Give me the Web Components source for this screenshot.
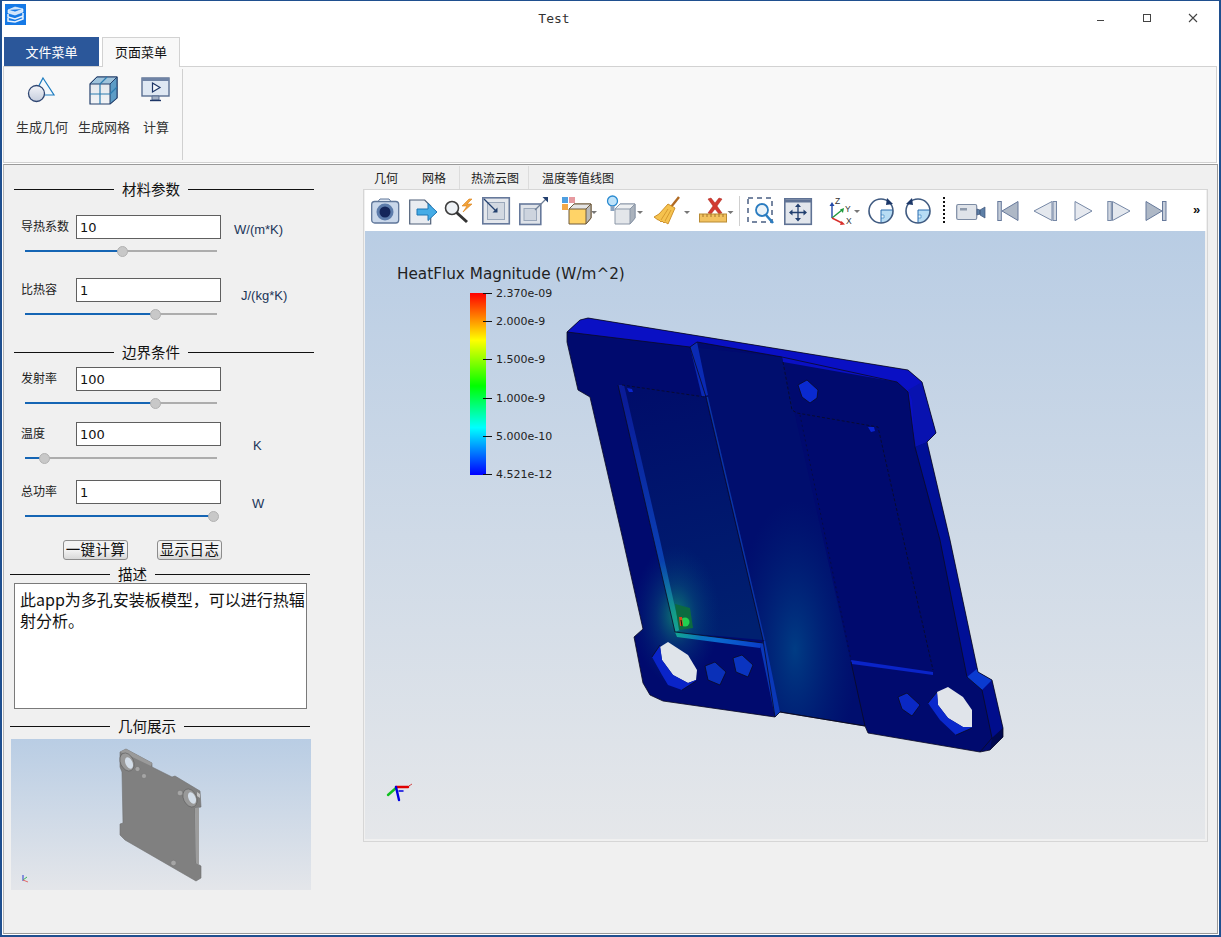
<!DOCTYPE html>
<html lang="zh">
<head>
<meta charset="utf-8">
<title>Test</title>
<style>
  html, body { margin: 0; height: 100%; background: #f0f0f0; }
  body { font-family: "Liberation Sans", "Noto Sans CJK SC", sans-serif; }
</style>
</head>
<body>
<app-window></app-window>

<script>
const CJK = '"Noto Sans CJK SC", "Liberation Sans", sans-serif';
const caret = (x, y) => `<path d="M${x} ${y}h6l-3 3z" fill="#777"/>`;

const ribbonIcons = {
  shape: `<svg width="32" height="28" viewBox="0 0 32 28">
    <path d="M17 2 28 19H8z" fill="#f4f8fc" stroke="#1c7cc0" stroke-width="1.2"/>
    <defs><linearGradient id="c" x1="0" y1="0" x2="0" y2="1"><stop offset="0" stop-color="#f2f4f8"/><stop offset="1" stop-color="#c5cddd"/></linearGradient></defs>
    <circle cx="10.500" cy="17.500" r="8" fill="url(#c)" stroke="#2f4672" stroke-width="1.300"/></svg>`,
  mesh: `<svg width="32" height="30" viewBox="0 0 32 30">
    <defs><linearGradient id="m" x1="0" y1="0" x2="0" y2="1"><stop offset="0" stop-color="#dfe3e9"/><stop offset="1" stop-color="#f2f4f6"/></linearGradient></defs>
    <path d="M2 9 9 2h20v21l-7 6H2z" fill="url(#m)" stroke="#24406c" stroke-width="1.200"/>
    <path d="M22 9 29 2v21l-7 6z" fill="#5d9cc6" stroke="#24406c"/>
    <path d="M2 9 9 2h20l-7 7z" fill="#9fc3db" stroke="#24406c"/>
    <path d="M12 9v20M2 19h20M12 9l7-7M22 19l7-7" stroke="#2d7cb0" stroke-width="1.200" fill="none"/></svg>`,
  run: `<svg width="30" height="26" viewBox="0 0 30 26">
    <rect x="1" y="1" width="27" height="18" fill="#dfe8f3" stroke="#5a6f92" stroke-width="1.400"/>
    <path d="M1 1h27v3H1z" fill="#6f83a5"/>
    <path d="M11.500 6 19 10.500 11.500 15z" fill="#f3f6fa" stroke="#1d3566" stroke-width="1.200"/>
    <path d="M11 19h7v4h-7z" fill="#a5b2c5" stroke="#5a6f92"/><path d="M9 23.500h11" stroke="#1d3566" stroke-width="1.400"/></svg>`
};

const toolIcons = {
  camera: `<rect x=".7" y="6.500" width="27" height="21.500" rx="3" fill="#c9d7ea" stroke="#5f7699" stroke-width="1.300"/><path d="M7 6.500l2-2.500h9l2 2.500z" fill="#dfe7f2" stroke="#5f7699"/><circle cx="14" cy="17" r="8.500" fill="#5d7cab"/><circle cx="14" cy="17" r="5.500" fill="#14255a"/>`,
  export: `<path d="M.7 5h15l6 6v18H.7z" fill="#e9ecf1" stroke="#4f5f78" stroke-width="1.200"/><path d="M8 14h11V8.500L28 17l-9 8.500V20H8z" fill="#45ace6" stroke="#1f76b4"/>`,
  bolt: `<circle cx="7" cy="13" r="6.500" fill="#eef2f6" stroke="#3d3d3d" stroke-width="1.600"/><path d="M11.500 17.500 22 27" stroke="#333" stroke-width="3"/><path d="M24 4l-7 7h5l-4 6 9-8h-5l5-5z" fill="#f2a33a" stroke="#d8801a" stroke-width=".6"/>`,
  boxin: `<rect x=".8" y="2.800" width="26.500" height="26" fill="#e4e7ec" stroke="#66799b" stroke-width="1.600"/><rect x="5.500" y="7.500" width="17" height="17" fill="#d2d8e1" stroke="#9aa7ba"/><path d="M2 4l12 12" stroke="#23406f" stroke-width="1.300"/><path d="M15.500 17.500h-5l5-5z" fill="#23406f"/>`,
  boxout: `<rect x=".8" y="9" width="21" height="20.500" fill="#dfe3e9" stroke="#66799b" stroke-width="1.600"/><rect x="5" y="13.500" width="12.500" height="12" fill="#cdd4de" stroke="#9aa7ba"/><path d="M16 15 27 4" stroke="#6f7f97" stroke-width="1.200"/><path d="M29 2v5.500l-5.500-5.500z" fill="#23406f"/>`,
  cube: `<rect x="1" y="2" width="6" height="6" fill="#4e9fe0"/><rect x="8" y="2" width="6" height="6" fill="#e79aa0"/><rect x="1" y="9" width="6" height="6" fill="#f3a746"/><path d="M8 14l5-5h17v14l-5 6H8z" fill="#ffd367" stroke="#6f5a3c"/><path d="M25 14v15l5-6V9z" fill="#b9b9b9" stroke="#6f5a3c"/><path d="M8 14l5-5h17l-5 5z" fill="#e4e4e4" stroke="#6f5a3c"/>${caret(30, 16)}`,
  lightcube: `<circle cx="5.500" cy="6" r="5" fill="#bfe3fa" stroke="#2a8ad0" stroke-width="1.300"/><path d="M3.500 11h4v5h-4z" fill="#8aa3bf"/><path d="M8 14l5-5h15v14l-5 6H8z" fill="#e3e6ea" stroke="#8b97a8"/><path d="M23 14v15l5-6V9z" fill="#aab2bc" stroke="#8b97a8"/><path d="M8 14l5-5h15l-5 5z" fill="#eef0f2" stroke="#8b97a8"/>${caret(30, 16)}`,
  broom: `<path d="M25 2 17 12" stroke="#b06a22" stroke-width="2.400"/><path d="M14 9l7 4-7 16-3-2-1 1-2-2-1 1-2-2-1 0-4-3 5-3z" fill="#f5c24e" stroke="#c98a22" stroke-width=".9"/><path d="M14 14 7 25M17 15l-6 11" stroke="#c98a22" stroke-width=".7"/>${caret(30, 16)}`,
  ruler: `<path d="M9 4l3-1 4 5 4-5 3 1-5 7 5 7-3 1-4-5-4 5-3-1 5-7z" fill="#d23a30" stroke="#a8241c" stroke-width=".5"/><rect x=".5" y="19" width="27" height="8" fill="#f2c260" stroke="#b98b33"/><path d="M4 19v3M8 19v3M12 19v3M16 19v3M20 19v3M24 19v3" stroke="#a4772b"/>${caret(28.500, 16)}`,
  boxzoom: `<rect x="1" y="3" width="24" height="24" fill="none" stroke="#4a5f82" stroke-width="1.500" stroke-dasharray="5 4"/><circle cx="15" cy="15" r="6" fill="#eaf2f8" stroke="#2a7cc0" stroke-width="1.800"/><path d="M19 20l7 8" stroke="#2a7cc0" stroke-width="2.600"/>`,
  fit: `<rect x=".8" y="3.800" width="26.500" height="25.500" fill="#e2e6ec" stroke="#5f7294" stroke-width="1.600"/><path d="M1 6h26" stroke="#5f7294" stroke-width="3"/><path d="M14 10v15M6.500 17.500h15" stroke="#23406f" stroke-width="1.300"/><path d="M14 8.500l3 3.500h-6zM14 26.500l3-3.500h-6zM5 17.500l3.500-3v6zM23 17.500l-3.500-3v6z" fill="#23406f"/>`,
  axes: `<path d="M2 23V10" stroke="#2248a8" stroke-width="1.400"/><path d="M2 7l2.500 4h-5z" fill="#2248a8"/><path d="M2 23 12 15" stroke="#1f9a3c" stroke-width="1.400"/><path d="M14 13l-1 5-3-3.500z" fill="#1f9a3c"/><path d="M2 23 12 28" stroke="#d8302c" stroke-width="1.400"/><path d="M15 29.500l-5 .5 1.500-4z" fill="#d8302c"/><text x="5" y="9" font-family="Liberation Sans" font-size="8.500" fill="#333">Z</text><text x="15" y="17" font-family="Liberation Sans" font-size="8.500" fill="#333">Y</text><text x="16" y="29" font-family="Liberation Sans" font-size="8.500" fill="#333">X</text>${caret(24, 15)}`,
  cw: `<path d="M13 15h12a12 12 0 0 1-12 13z" fill="#b7dcf4"/><path d="M13 20h3v3h-3" fill="#eaf5fc" stroke="#2a7cc0" stroke-width=".6"/><path d="M13 15h12M13 15v13" stroke="#2a6cb0" stroke-width="1"/><circle cx="13" cy="16" r="12" fill="none" stroke="#3f5a80" stroke-width="1.600"/><path d="M19 3l6 6-7 1z" fill="#1c3768"/>`,
  ccw: `<path d="M13 15h12a12 12 0 0 1-12 13z" fill="#b7dcf4"/><path d="M13 20h3v3h-3" fill="#eaf5fc" stroke="#2a7cc0" stroke-width=".6"/><path d="M13 15h12M13 15v13" stroke="#2a6cb0" stroke-width="1"/><circle cx="13" cy="16" r="12" fill="none" stroke="#3f5a80" stroke-width="1.600"/><path d="M7 3 1 9l7 1z" fill="#1c3768"/>`,
  video: `<rect x=".7" y="9.500" width="20" height="15" rx="1.500" fill="#dfe3e9" stroke="#7c8ba3" stroke-width="1.200"/><rect x="4" y="13" width="7" height="2.500" fill="#8e9aac"/><path d="M21 14l3 1v4l-3 1zM24 15l5-3v11l-5-3z" fill="#5d7fa6" stroke="#40587c" stroke-width=".7"/>`,
  first: `<rect x=".8" y="6.500" width="3.500" height="19" fill="#c4ccd8" stroke="#66799b"/><path d="M21 6.500v19L5 16z" fill="#aeb8c6" stroke="#66799b"/>`,
  prev: `<path d="M19 6.500v19L1 16z" fill="#e4e8ee" stroke="#7688a6"/><rect x="20" y="6.500" width="3.500" height="19" fill="#d1d7e1" stroke="#7688a6"/>`,
  play: `<path d="M1 6.500v19L18 16z" fill="#e6e9ef" stroke="#7688a6"/>`,
  next: `<rect x=".8" y="6.500" width="3.500" height="19" fill="#d1d7e1" stroke="#7688a6"/><path d="M5.500 6.500v19L23 16z" fill="#e4e8ee" stroke="#7688a6"/>`,
  last: `<path d="M1 6.500v19L17 16z" fill="#aeb8c6" stroke="#66799b"/><rect x="17.500" y="6.500" width="3.500" height="19" fill="#c4ccd8" stroke="#66799b"/>`
};

class TitleBar extends HTMLElement {
  constructor() {
    super();
    this.attachShadow({ mode: "open" });
    this.shadowRoot.innerHTML = `
      <style>
        :host { display: flex; align-items: center; height: 36px; background: #fff; }
        svg { display: block; }
        .logo { margin: -10px 0 0 3px; }
        .title { flex: 1; text-align: center; font: 13px "DejaVu Sans Mono", monospace; color: #333; margin: -1px 0 0 4px; }
        .btns { display: flex; align-items: center; margin: -3px 3px 0 0; }
        .btn { width: 46px; display: flex; justify-content: center; }
      </style>
      <svg class="logo" width="21" height="21" viewBox="0 0 21 21">
        <rect width="21" height="21" fill="#1579e6"/>
        <path d="M3 6 10 3l8 2-8 3zM3 6v3l7 2 8-3V5" fill="#cfe3fa" stroke="#fff" stroke-width=".6"/>
        <path d="M3 10v3l7 2 8-3V9M3 14v3l7 1 8-3v-3" fill="none" stroke="#e9f2fd" stroke-width="1.500"/>
      </svg>
      <div class="title">Test</div>
      <div class="btns">
        <div class="btn"><svg width="10" height="10"><path d="M1 7.500h7" stroke="#444"/></svg></div>
        <div class="btn"><svg width="10" height="10"><rect x="1.500" y="1.500" width="7" height="7" fill="none" stroke="#444"/></svg></div>
        <div class="btn"><svg width="10" height="10"><path d="M1 1l8 8M9 1 1 9" stroke="#444" stroke-width="1.100"/></svg></div>
      </div>`;
  }
}
customElements.define("title-bar", TitleBar);

class RibbonItem extends HTMLElement {
  constructor() {
    super();
    this.attachShadow({ mode: "open" });
  }
  connectedCallback() {
    this.shadowRoot.innerHTML = `
      <style>
        :host { display: flex; flex-direction: column; align-items: center; font: 13px ${CJK}; color: #333; }
        .ico { height: 42px; display: flex; align-items: center; }
        .lbl { margin-top: 7px; line-height: 18px; white-space: nowrap; }
      </style>
      <div class="ico">${ribbonIcons[this.getAttribute("icon")]}</div>
      <div class="lbl"><slot></slot></div>`;
  }
}
customElements.define("ribbon-item", RibbonItem);

class RibbonBar extends HTMLElement {
  constructor() {
    super();
    this.attachShadow({ mode: "open" });
    this.shadowRoot.innerHTML = `
      <style>
        :host { display: block; font: 13px ${CJK}; background: #fff; padding-bottom: 1px; }
        .tabs { display: flex; height: 29px; padding-left: 2px; background: #fff; }
        .tab { display: flex; align-items: center; justify-content: center; box-sizing: border-box; padding-bottom: 1px; }
        .file { width: 95px; background: #2b579a; color: #fff; margin-right: 3px; }
        .page { width: 78px; color: #111; background: #f8f8f8; border: 1px solid #d2d2d2; border-bottom: 0; height: 30px; position: relative; z-index: 1; padding-bottom: 2px; }
        .panel { margin: 0 2px 0 1px; background: #f8f8f8; border: 1px solid #d2d2d2; box-sizing: border-box; height: 97px; display: flex; }
        .group { width: 179px; box-sizing: border-box; margin-top: 2px; border-right: 1px solid #d0d0d0; display: flex; gap: 10px; padding: 0 0 0 12px; height: 91px; }
        .group ribbon-item:last-child { margin-left: 1px; }
      </style>
      <div class="tabs"><div class="tab file">文件菜单</div><div class="tab page">页面菜单</div></div>
      <div class="panel">
        <div class="group">
          <ribbon-item icon="shape">生成几何</ribbon-item>
          <ribbon-item icon="mesh">生成网格</ribbon-item>
          <ribbon-item icon="run">计算</ribbon-item>
        </div>
      </div>`;
  }
}
customElements.define("ribbon-bar", RibbonBar);

class SectionHeading extends HTMLElement {
  constructor() {
    super();
    this.attachShadow({ mode: "open" });
    this.shadowRoot.innerHTML = `
      <style>
        :host { display: flex; align-items: center; width: 300px; height: 18px; font: 14.5px ${CJK}; color: #111; gap: 8px; white-space: nowrap; }
        .l { height: 1px; background: #111; }
        .a { width: 100px; }
        .b { flex: 1; }
        .t { margin-bottom: 2px; }
      </style>
      <div class="l a"></div><span class="t"><slot></slot></span><div class="l b"></div>`;
  }
}
customElements.define("section-heading", SectionHeading);

class ParamRow extends HTMLElement {
  constructor() {
    super();
    this.attachShadow({ mode: "open" });
  }
  connectedCallback() {
    const pct = this.getAttribute("pct");
    const unitX = this.getAttribute("unit-x") || 13;
    const unitY = this.getAttribute("unit-y") || 4;
    this.shadowRoot.innerHTML = `
      <style>
        :host { display: block; height: 42px; }
        .top { display: flex; height: 24px; padding-left: 17px; }
        .lbl { width: 55px; font: 12px/22px ${CJK}; color: #222; white-space: nowrap; }
        .val { box-sizing: border-box; width: 145px; height: 24px; background: #fff; border: 1px solid #5f5f5f; font: 13px/23px "DejaVu Sans", sans-serif; color: #111; padding-left: 3px; }
        .unit { font: 13px/18px "Liberation Sans", sans-serif; color: #1a3558; margin-left: ${unitX}px; margin-top: ${unitY}px; white-space: nowrap; height: 18px; }
        .track { position: relative; margin: 11px 0 0 21px; width: 192px; height: 2px; background: #adadad; }
        .fill { height: 2px; background: #1565b4; width: ${pct}%; }
        .thumb { position: absolute; left: ${pct}%; top: -4.500px; width: 11px; height: 11px; margin-left: -5px; box-sizing: border-box; border-radius: 50%; background: #c8c8c8; border: 1px solid #b2b2b2; }
      </style>
      <div class="top">
        <div class="lbl">${this.getAttribute("label")}</div>
        <div class="val">${this.getAttribute("value")}</div>
        <div class="unit">${this.getAttribute("unit") || ""}</div>
      </div>
      <div class="track"><div class="fill"></div><div class="thumb"></div></div>`;
  }
}
customElements.define("param-row", ParamRow);

class GeomPreview extends HTMLElement {
  constructor() {
    super();
    this.attachShadow({ mode: "open" });
    this.shadowRoot.innerHTML = `
      <style>
        :host { display: block; width: 300px; height: 151px; }
        svg { display: block; }
      </style>
      <svg width="300" height="151" viewBox="11 739 300 151">
        <defs>
          <linearGradient id="bg" x1="0" y1="0" x2="0" y2="1"><stop offset="0" stop-color="#b9cde4"/><stop offset="1" stop-color="#e4e6ea"/></linearGradient>
        </defs>
        <rect x="11" y="739" width="300" height="151" fill="url(#bg)"/>
        <path d="M120 752 126 749 152 763V767L172 777 175 776 200 791 201 807 195 808 196 863 201 866V878L196 881 125 840 120 835V824L123 823 122 772 120 767z" fill="#808080" stroke="#6f6f6f" stroke-width=".6"/>
        <path d="M195 808 199 808 199 865 196 863z" fill="#9c9c9c"/>
        <path d="M120 752 126 749 152 763 151 766 126 754z" fill="#9a9a9a"/>
        <ellipse cx="127" cy="762" rx="6.500" ry="9.500" fill="#999" stroke="#5e5e5e" stroke-width=".6" transform="rotate(-25 127 762)"/>
        <ellipse cx="129" cy="763" rx="3.500" ry="6" fill="#d3dde8" transform="rotate(-25 129 763)"/>
        <ellipse cx="190" cy="798" rx="6.500" ry="9.500" fill="#999" stroke="#5e5e5e" stroke-width=".6" transform="rotate(-25 190 798)"/>
        <ellipse cx="192" cy="798" rx="3.500" ry="6" fill="#d3dde8" transform="rotate(-25 192 798)"/>
        <g fill="#a5a5a5" stroke="#6d6d6d" stroke-width=".5"><circle cx="137.500" cy="769" r="2.500"/><circle cx="144" cy="776" r="2.500"/><circle cx="180" cy="793" r="2.800"/><circle cx="173.500" cy="863" r="2.800"/></g>
        <path d="M197 792 200 794V798L197 796z" fill="#c2c2c2"/>
        <path d="M23 881V875" stroke="#2a3bd0"/><path d="M23 880 27 877" stroke="#3ab85a"/><path d="M23 880 28 882" stroke="#e26a6a"/>
      </svg>`;
  }
}
customElements.define("geom-preview", GeomPreview);

class SidePanel extends HTMLElement {
  constructor() {
    super();
    this.attachShadow({ mode: "open" });
    this.shadowRoot.innerHTML = `
      <style>
        :host { display: block; width: 359px; flex: none; box-sizing: border-box; padding-top: 15px; font-family: ${CJK}; }
        .in { margin-left: 10px; }
        .out { margin-left: 6px; }
        .btns { display: flex; gap: 29px; margin: 18px 0 0 59px; }
        button { box-sizing: border-box; width: 65px; height: 20px; padding: 0 0 3px; font: 14.5px/15px ${CJK}; letter-spacing: .4px; color: #111; background: linear-gradient(#f3f3f3, #f3f3f3 50%, #d8d8d8); border: 1px solid #8c8c8c; border-radius: 3px; white-space: nowrap; }
        .desc { box-sizing: border-box; width: 293px; height: 126px; margin-left: 10px; background: #fff; border: 1px solid #7a7a7a; padding: 5px 0 5px 5px; font: 16px/21px ${CJK}; color: #111; }
        .pv { margin: 4px 0 0 7px; }
      </style>
      <section-heading class="in">材料参数</section-heading>
      <param-row style="margin-top:17px" label="导热系数" value="10" unit="W/(m*K)" pct="50.500" unit-y="6"></param-row>
      <param-row style="margin-top:21px" label="比热容" value="1" unit="J/(kg*K)" unit-x="20" unit-y="9" pct="67.500"></param-row>
      <section-heading style="margin-top:23px" class="in">边界条件</section-heading>
      <param-row style="margin-top:6px" label="发射率" value="100" pct="67.500"></param-row>
      <param-row style="margin-top:13px" label="温度" value="100" unit="K" unit-x="32" unit-y="15" pct="10"></param-row>
      <param-row style="margin-top:16px" label="总功率" value="1" unit="W" unit-x="31" unit-y="15" pct="98"></param-row>
      <div class="btns"><button>一键计算</button><button>显示日志</button></div>
      <section-heading style="margin-top:5px" class="out">描述</section-heading>
      <div class="desc">此app为多孔安装板模型，可以进行热辐射分析。</div>
      <section-heading style="margin-top:8px" class="out">几何展示</section-heading>
      <div class="pv"><geom-preview></geom-preview></div>`;
  }
}
customElements.define("side-panel", SidePanel);

class ToolButton extends HTMLElement {
  constructor() {
    super();
    this.attachShadow({ mode: "open" });
  }
  connectedCallback() {
    const w = this.getAttribute("w");
    this.shadowRoot.innerHTML = `
      <style>
        :host { display: block; flex: none; height: 32px; width: ${w}px; }
        svg { display: block; overflow: visible; }
      </style>
      <svg width="${w}" height="32" viewBox="0 0 ${w} 32">${toolIcons[this.getAttribute("icon")]}</svg>`;
  }
}
customElements.define("tool-button", ToolButton);

class ToolStrip extends HTMLElement {
  constructor() {
    super();
    this.attachShadow({ mode: "open" });
    // [icon, gap from previous, width]
    const items = [
      ["camera", 6, 28], ["export", 10, 28], ["bolt", 8, 29], ["boxin", 8, 28], ["boxout", 9, 29],
      ["cube", 13, 36], ["lightcube", 10, 36], ["broom", 11, 36], ["ruler", 9, 36], ["sep", 4, 1],
      ["boxzoom", 7, 28], ["fit", 9, 28], ["axes", 18, 30], ["cw", 8, 26], ["ccw", 11, 26], ["dots", 12, 2],
      ["video", 11, 30], ["first", 11, 22], ["prev", 14, 24], ["play", 17, 19], ["next", 14, 24], ["last", 14, 22]
    ];
    const html = items.map(([n, g, w]) => {
      if (n === "sep") return `<div class="sep" style="margin-left:${g}px"></div>`;
      if (n === "dots") return `<div class="dots" style="margin-left:${g}px"></div>`;
      return `<tool-button icon="${n}" w="${w}" style="margin-left:${g}px"></tool-button>`;
    }).join("");
    this.shadowRoot.innerHTML = `
      <style>
        :host { display: flex; align-items: flex-start; height: 41px; background: #fff; box-sizing: border-box; padding: 5px 0 0 0; }
        .sep { width: 1px; height: 30px; background: #cfcfcf; margin-top: 1px; flex: none; }
        .dots { width: 2px; height: 27px; margin-top: 2px; flex: none; background: repeating-linear-gradient(#111 0 2px, transparent 2px 4px); }
        .more { margin-left: 26px; font: bold 13px/30px "Liberation Sans", sans-serif; color: #111; }
      </style>
      ${html}<div class="more">»</div>`;
  }
}
customElements.define("tool-strip", ToolStrip);

class HeatView extends HTMLElement {
  constructor() {
    super();
    this.attachShadow({ mode: "open" });
    const ticks = [[293, "2.370e-09"], [321, "2.000e-9"], [359, "1.500e-9"], [398, "1.000e-9"], [436, "5.000e-10"], [474, "4.521e-12"]];
    const sil = "M567 332 580 320 588 318 908 370 922 382 936 433 927 442 950 540 978 672 992 680 1003 728V737L990 750 980 752 868 733 865 726 780 712 775 717 663 701 650 695 643 683 634 637 643 629 623 540 590 397 578 390 567 342z";
    this.shadowRoot.innerHTML = `
      <style>
        :host { display: block; width: 840px; height: 608px; }
        svg { display: block; }
        text { font-family: "DejaVu Sans", sans-serif; fill: #222; }
      </style>
      <svg width="840" height="608" viewBox="365 231 840 608">
        <defs>
          <linearGradient id="bg" x1="0" y1="0" x2="0" y2="1"><stop offset="0" stop-color="#b9cde4"/><stop offset="1" stop-color="#e5e7ea"/></linearGradient>
          <linearGradient id="bar" x1="0" y1="1" x2="0" y2="0">
            <stop offset="0" stop-color="#0000ff"/><stop offset=".26" stop-color="#00ffff"/><stop offset=".49" stop-color="#00ff00"/><stop offset=".74" stop-color="#ffff00"/><stop offset="1" stop-color="#ff0000"/>
          </linearGradient>
          <linearGradient id="rec" gradientUnits="userSpaceOnUse" x1="640" y1="390" x2="700" y2="640">
            <stop offset="0" stop-color="#000d6a"/><stop offset="1" stop-color="#002070"/>
          </linearGradient>
          <linearGradient id="strip" gradientUnits="userSpaceOnUse" x1="640" y1="400" x2="670" y2="630">
            <stop offset="0" stop-color="#0a1c98"/><stop offset=".7" stop-color="#0a40b4"/><stop offset="1" stop-color="#1fc0c0"/>
          </linearGradient>
          <linearGradient id="strip2" gradientUnits="userSpaceOnUse" x1="675" y1="632" x2="763" y2="645">
            <stop offset="0" stop-color="#18d0b0"/><stop offset=".3" stop-color="#0a78d0"/><stop offset="1" stop-color="#0a3cc8"/>
          </linearGradient>
          <radialGradient id="glow"><stop offset="0" stop-color="#12a070" stop-opacity=".75"/><stop offset=".45" stop-color="#0a6a80" stop-opacity=".35"/><stop offset="1" stop-color="#003a80" stop-opacity="0"/></radialGradient>
          <radialGradient id="midglow"><stop offset="0" stop-color="#004488" stop-opacity=".85"/><stop offset="1" stop-color="#002a78" stop-opacity="0"/></radialGradient>
          <clipPath id="plate"><path d="${sil}"/></clipPath>
          <clipPath id="midclip"><path d="M690 347 697 342 706 397 763 640 780 712 865 726 851 662 783 362 782 357z"/></clipPath>
        </defs>
        <rect x="365" y="231" width="840" height="608" fill="url(#bg)"/>

        <text x="397" y="279" font-size="15.250">HeatFlux Magnitude (W/m^2)</text>
        <rect x="470" y="293" width="16" height="182" fill="url(#bar)"/>
        ${ticks.map(([y, t]) => `<path d="M483 ${y}.500h9" stroke="#111"/><text x="496" y="${y + 4}" font-size="11">${t}</text>`).join("")}

        <path d="${sil}" fill="#000a6e"/>
        <g clip-path="url(#plate)">
          <path d="M567 332 580 320 588 318 908 370 922 382 936 433 927 442 915 447 908 392 897 382 783 362 782 357 697 342 690 347z" fill="#0a10c4"/>
          <path d="M908 390 922 382 936 433 927 442 915 447 912 400z" fill="#0812b0"/>
          <path d="M915 447 927 442 950 540 978 672 967 677 940 540z" fill="#000f96"/>
          <path d="M967 677 978 672 992 680 1003 728 992 738 982 690z" fill="#000d8c"/>
          <path d="M967 677 978 668 992 680 982 690z" fill="#0a3ad0"/>
          <path d="M992 738 1003 728V737L990 750z" fill="#00084f"/>
          <path d="M690 347 697 342 706 397 763 640 780 712 865 726 851 662 783 362 782 357z" fill="#000e6e"/>
          <g clip-path="url(#midclip)"><ellipse cx="795" cy="650" rx="62" ry="150" fill="url(#midglow)"/></g>
          <path d="M618 385 705 397 763 640 675 632z" fill="url(#rec)"/>
          <path d="M618 385 624 385 660 540 680 630 675 632z" fill="url(#strip)"/>
          <path d="M675 632 763 643 760 648 677 637z" fill="url(#strip2)"/>
          <path d="M690 347 697 342 708 395 702 397z" fill="#0a2ab4"/>
          <path d="M706 397 708 397 765 640 763 640z" fill="#0a34a8"/>
          <path d="M760 645 765 640 780 712 775 717z" fill="#0a38b8"/>
          <path d="M851 660 933 672 933 675 852 664z" fill="#0a24c8"/>
          <ellipse cx="676" cy="615" rx="44" ry="70" fill="url(#glow)"/>
        </g>
        <path d="M675 604 690 608 693 628 679 630z" fill="#0c6a40"/>
        <circle cx="685" cy="622" r="4.500" fill="#20d050"/>
        <path d="M679 617l3 0 1 9h-3z" fill="#d84818"/>
        <path d="M681 620l1 6" stroke="#111"/>

        <path d="M668 642 688 655 697 670 696 680 688 683 673 675 662 660 660 647z" fill="#dfe4ea"/>
        <path d="M652 657 660 645 662 660 673 675 688 683 696 680 696 681 682 690 668 685 662 675z" fill="#0a24c8"/>
        <path d="M948 687 963 697 972 710 972 727 963 727 948 718 938 705 937 692z" fill="#e0e4ea"/>
        <path d="M928 703 937 692 938 705 948 718 963 727 972 727 972 728 956 735 940 720z" fill="#0a28cc"/>
        <path d="M705 666 715 662 726 672 720 685 708 680z" fill="#0a30b8"/>
        <path d="M733 658 742 655 753 665 748 677 736 672z" fill="#0a34c0"/>
        <path d="M898 697 907 693 920 705 912 716 902 709z" fill="#0a28c4"/>
        <path d="M798 385 807 380 818 390 817 398 810 403 802 397z" fill="#0a2ad0"/>
        <path d="M627 388l5 1 1 3-4 0z" fill="#0a24d0"/>
        <path d="M868 427l6 0 1 4-4 1z" fill="#0a24d0"/>

        <g fill="none" stroke="#0a0a22" stroke-width=".8">
          <path d="${sil}"/>
          <path d="M567 332 690 347 697 342 782 357 897 382 908 392 915 447 940 540 967 677 982 690 992 738"/>
          <path d="M992 738 980 752"/>
          <path d="M618 385 675 632 763 643"/>
          <path d="M622 385 705 397" stroke-dasharray="3 2"/>
          <path d="M690 347 706 397 763 640 775 717"/>
          <path d="M780 712 865 726 851 662"/>
          <path d="M783 362 792 410 797 413 878 427 933 670" stroke-dasharray="3 2"/>
          <path d="M800 415 851 660" stroke-dasharray="2 3" stroke-opacity=".7"/>
          <path d="M798 385 807 380 818 390 817 398 810 403 802 397z"/>
          <path d="M705 666 715 662 726 672 720 685 708 680z"/>
          <path d="M733 658 742 655 753 665 748 677 736 672z"/>
          <path d="M898 697 907 693 920 705 912 716 902 709z"/>
          <path d="M652 657 660 645M682 690 696 681"/>
          <path d="M928 703 937 692M956 735 972 728"/>
        </g>

        <g stroke-linecap="round">
          <path d="M396 788 388 795" stroke="#10c020" stroke-width="2.400"/>
          <path d="M396 787H408" stroke="#e00000" stroke-width="2.400"/>
          <path d="M396 787 399 800" stroke="#0000e0" stroke-width="2.400"/>
          <path d="M399 791h4" stroke="#0000e0" stroke-width="1.500"/>
          <path d="M409 786l3-2" stroke="#d02020" stroke-dasharray="1 1"/>
        </g>
      </svg>`;
  }
}
customElements.define("heat-view", HeatView);

class ViewArea extends HTMLElement {
  constructor() {
    super();
    this.attachShadow({ mode: "open" });
    this.shadowRoot.innerHTML = `
      <style>
        :host { display: block; flex: 1; padding-top: 1px; }
        .tabs { display: flex; height: 23px; font: 12px/23px ${CJK}; color: #222; }
        .t { white-space: nowrap; border-right: 1px solid #dcdcdc; }
        .t:nth-child(1) { padding: 0 12px 0 11px; border-right: 0; }
        .t:nth-child(2) { padding: 0 13px 0 12px; }
        .t:nth-child(3) { padding: 0 9px 0 11px; }
        .t:nth-child(4) { padding-left: 13px; border-right: 0; }
        .frame { box-sizing: border-box; width: 845px; height: 653px; border: 1px solid #d6d6d6; padding: 0 1px 2px 1px; }
      </style>
      <div class="tabs"><div class="t">几何</div><div class="t">网格</div><div class="t">热流云图</div><div class="t">温度等值线图</div></div>
      <div class="frame"><tool-strip></tool-strip><heat-view></heat-view></div>`;
  }
}
customElements.define("view-area", ViewArea);

class AppWindow extends HTMLElement {
  constructor() {
    super();
    this.attachShadow({ mode: "open" });
    this.shadowRoot.innerHTML = `
      <style>
        :host { display: flex; flex-direction: column; box-sizing: border-box; width: 1221px; height: 937px; border: 2px solid #1f4f8f; border-top-width: 1px; background: #fff; }
        .main { flex: 1; display: flex; margin: 0 1px 1px 1px; background: #f0f0f0; border: 1px solid #9a9a9a; border-left-color: #b4b4b4; }
      </style>
      <title-bar></title-bar>
      <ribbon-bar></ribbon-bar>
      <div class="main"><side-panel></side-panel><view-area></view-area></div>`;
  }
}
customElements.define("app-window", AppWindow);
</script>
</body>
</html>
